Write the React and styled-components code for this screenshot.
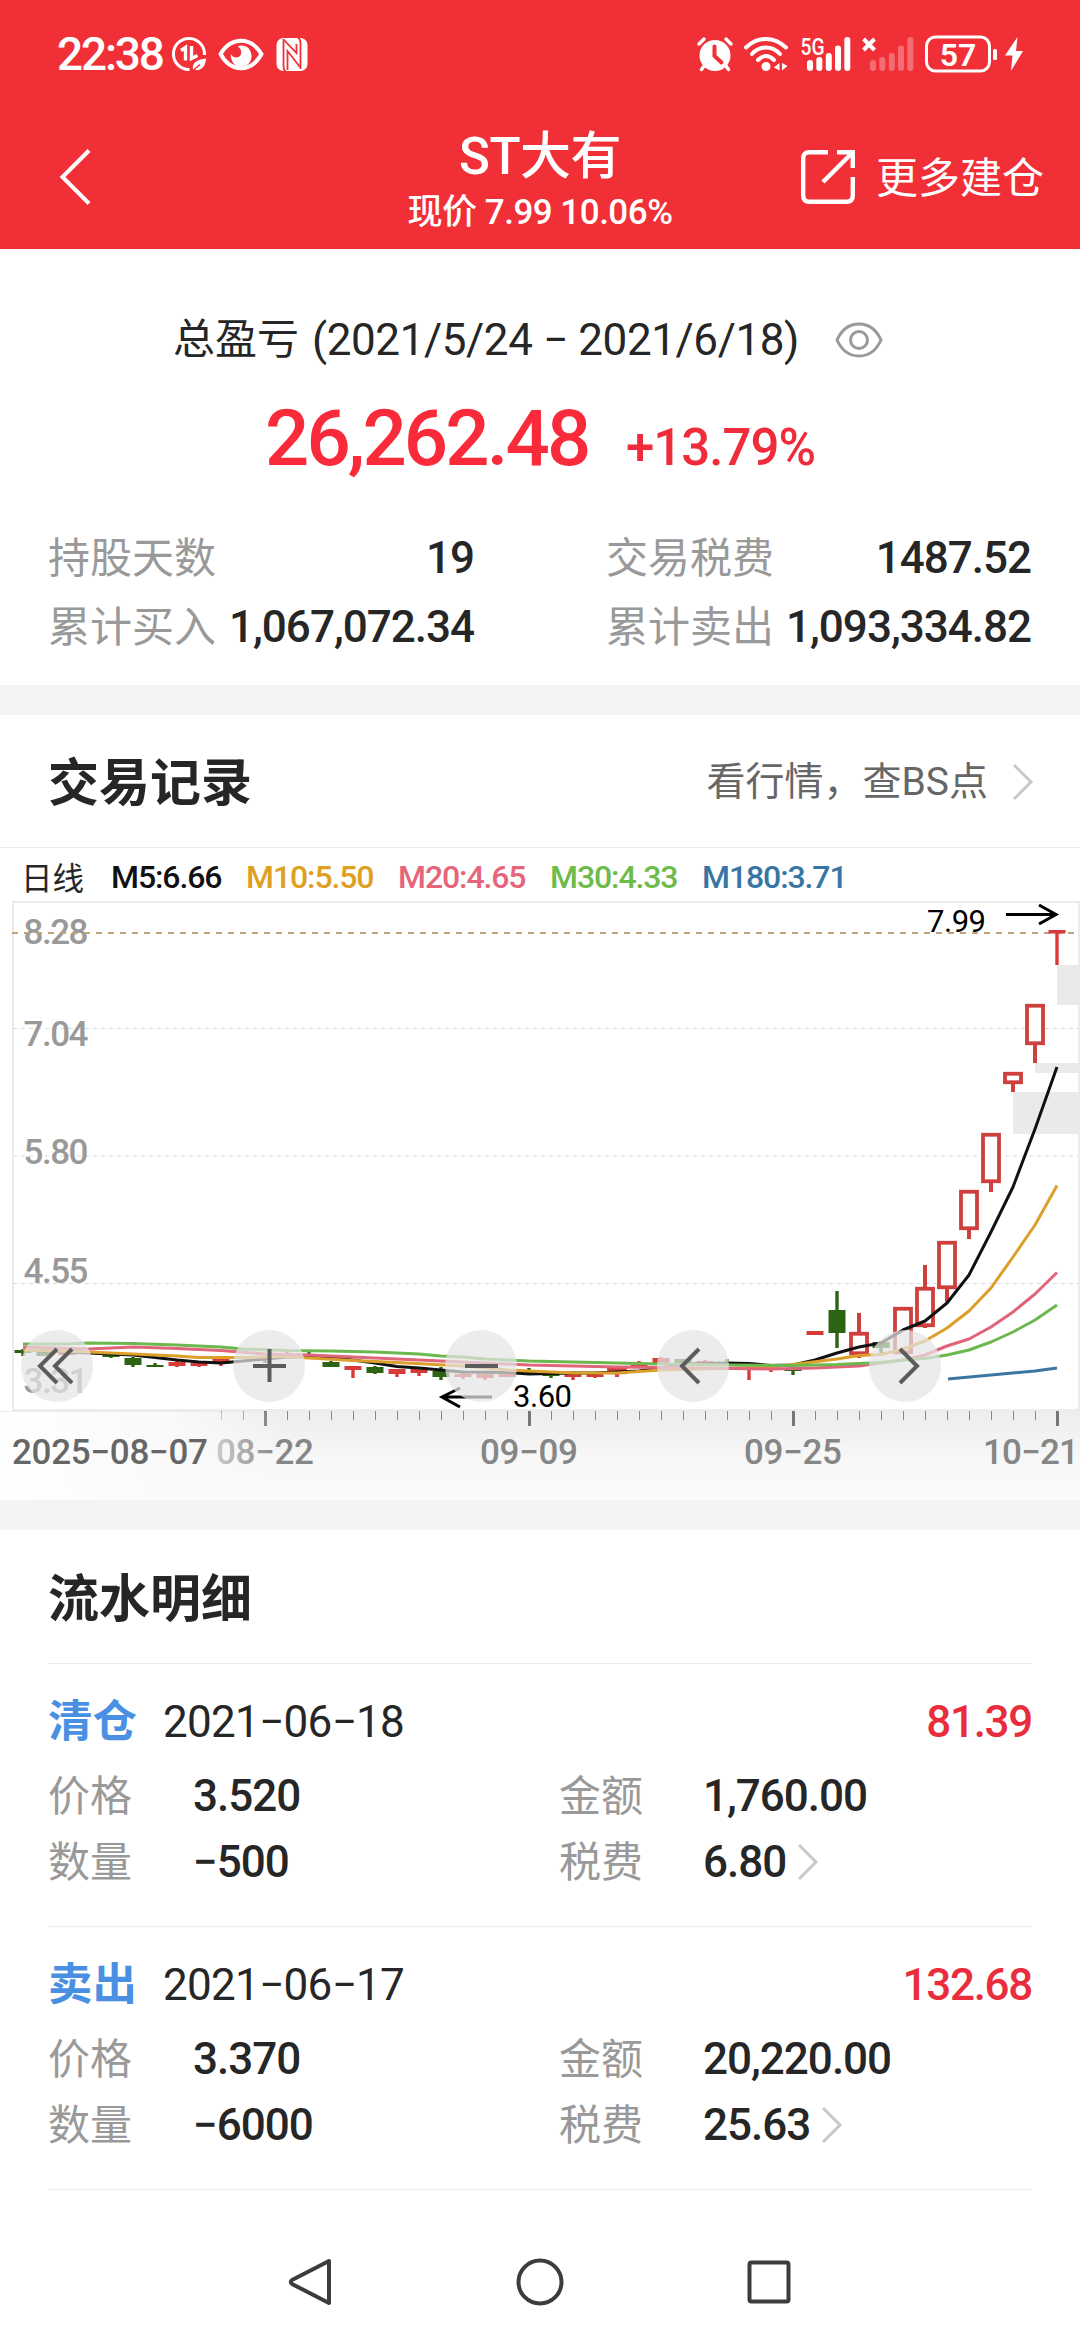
import React from 'react';
import styled, { createGlobalStyle } from 'styled-components';

const GlobalStyle = createGlobalStyle`
  * {
    box-sizing: border-box;
  }
  body {
    margin: 0;
    background: #fff;
    font-family: Roboto, 'Noto Sans CJK SC', sans-serif;
    color: #262626;
  }
  svg {
    display: block;
    flex: none;
    overflow: visible;
  }
`;

// Summary data
const stats = [
  { label: '持股天数', value: '19' },
  { label: '交易税费', value: '1487.52' },
  { label: '累计买入', value: '1,067,072.34' },
  { label: '累计卖出', value: '1,093,334.82' },
];

const averages = [
  { text: 'M5:6.66', color: '#111', width: 135 },
  { text: 'M10:5.50', color: '#dfa021', width: 152 },
  { text: 'M20:4.65', color: '#e5657a', width: 152 },
  { text: 'M30:4.33', color: '#6dbb49', width: 152 },
  { text: 'M180:3.71', color: '#3775a5', width: 160 },
];

const records = [
  { type: '清仓', date: '2021−06−18', profit: '81.39', price: '3.520', amount: '1,760.00', count: '−500', tax: '6.80' },
  { type: '卖出', date: '2021−06−17', profit: '132.68', price: '3.370', amount: '20,220.00', count: '−6000', tax: '25.63' },
];

// x, wick top, body top, body bottom, wick bottom, kind (g = fall, r = rise, h = hollow rise)
const candles = [
  [23, 1349, 1350, 1353, 1356, 'g'],
  [45, 1352, 1352, 1356, 1356, 'g'],
  [67, 1352, 1352, 1355, 1355, 'r'],
  [111, 1355, 1355, 1357, 1358, 'g'],
  [133, 1357, 1358, 1365, 1367, 'g'],
  [155, 1363, 1365, 1367, 1367, 'g'],
  [177, 1361, 1362, 1366, 1367, 'r'],
  [199, 1363, 1363, 1366, 1367, 'r'],
  [221, 1359, 1359, 1364, 1366, 'r'],
  [265, 1357, 1357, 1359, 1363, 'g'],
  [287, 1352, 1354, 1356, 1356, 'r'],
  [309, 1352, 1354, 1356, 1356, 'g'],
  [331, 1361, 1362, 1367, 1367, 'g'],
  [353, 1366, 1366, 1370, 1378, 'r'],
  [375, 1366, 1367, 1373, 1374, 'g'],
  [397, 1369, 1369, 1374, 1377, 'r'],
  [419, 1368, 1369, 1373, 1376, 'r'],
  [441, 1367, 1371, 1377, 1380, 'g'],
  [463, 1373, 1374, 1377, 1379, 'r'],
  [485, 1374, 1374, 1378, 1380, 'r'],
  [507, 1374, 1374, 1377, 1377, 'r'],
  [529, 1368, 1371, 1373, 1374, 'g'],
  [551, 1373, 1374, 1376, 1378, 'g'],
  [573, 1374, 1374, 1377, 1380, 'r'],
  [595, 1374, 1374, 1377, 1378, 'r'],
  [617, 1368, 1368, 1374, 1377, 'h'],
  [639, 1361, 1365, 1367, 1367, 'r'],
  [661, 1357, 1358, 1363, 1363, 'r'],
  [683, 1359, 1359, 1363, 1363, 'g'],
  [705, 1360, 1361, 1364, 1364, 'r'],
  [727, 1359, 1363, 1365, 1366, 'g'],
  [749, 1367, 1367, 1370, 1380, 'r'],
  [771, 1367, 1368, 1370, 1372, 'r'],
  [793, 1367, 1369, 1371, 1375, 'g'],
  [815, 1331, 1331, 1335, 1335, 'r'],
  [837, 1291, 1310, 1333, 1348, 'g'],
  [859, 1313, 1332, 1355, 1358, 'h'],
  [881, 1341, 1342, 1348, 1353, 'g'],
  [903, 1307, 1307, 1354, 1354, 'h'],
  [925, 1265, 1287, 1327, 1328, 'h'],
  [947, 1241, 1241, 1289, 1302, 'h'],
  [969, 1190, 1190, 1230, 1239, 'h'],
  [991, 1133, 1133, 1183, 1192, 'h'],
  [1013, 1072, 1072, 1084, 1092, 'h'],
  [1035, 1004, 1004, 1045, 1063, 'h'],
  [1057, 930, 930, 933.5, 965, 'r'],
];

const lines = [
  {
    color: '#111',
    points: '23,1350 67,1352 111,1354 133,1355 155,1357.5 177,1360 199,1362 221,1363 243,1361 287,1357 309,1357 331,1358 353,1360 375,1363 397,1366.5 419,1368 463,1372 507,1372.5 529,1374 573,1373 595,1373 617,1372 639,1371 661,1368 683,1364 727,1363 749,1363.5 771,1365.5 793,1365 815,1360 837,1353 859,1347 881,1343 903,1330 925,1321 947,1303 969,1275 991,1232 1013,1187 1035,1129 1057,1067',
  },
  {
    color: '#dc9f2a',
    points: '23,1350 89,1352 133,1354 177,1356 199,1357.5 243,1357.5 287,1356.5 309,1358 353,1360.5 397,1362.5 463,1366 507,1370 551,1372 573,1373 617,1373 661,1370 705,1369 771,1367 793,1364.5 837,1359 859,1355.5 881,1354.5 903,1349 925,1341 947,1328 969,1311 991,1288 1013,1257 1035,1225 1057,1185.5',
  },
  {
    color: '#e0647a',
    points: '23,1347 89,1349 133,1347 177,1348.5 221,1350.5 265,1354 309,1355 353,1357 397,1359 441,1361 529,1365 573,1366 617,1367 705,1368 771,1369 815,1368 859,1366 903,1360 925,1355 947,1346 969,1339 991,1327 1013,1312 1035,1294 1057,1272.5',
  },
  {
    color: '#6db74f',
    points: '23,1344 67,1344 89,1343 133,1343.5 177,1345 221,1347 243,1349 287,1350.5 331,1351 375,1352 419,1354 441,1356 463,1357 485,1359 529,1361 573,1362 617,1363 661,1364 727,1365 793,1365.5 837,1364.5 881,1362.5 903,1360 925,1358.5 947,1355 969,1350 991,1342 1013,1332 1035,1320 1057,1305',
  },
  { color: '#3b76a3', points: '948,1379 991,1375 1035,1371 1057,1368' },
];

const priceLabels = [
  ['8.28', 944],
  ['7.04', 1046],
  ['5.80', 1164],
  ['4.55', 1283],
  ['3.31', 1393],
];

const buttonIcons = [
  'M36 19 L19 36 L36 53 M51 19 L34 36 L51 53',
  'M20 36 H53 M36.5 19 V52',
  'M20 36 H53',
  'M42 19 L25 36 L42 53',
  'M31 19 L48 36 L31 53',
];

const signalBars = [
  [0, 23],
  [9.3, 20],
  [18.8, 16],
  [28, 8.5],
  [37.3, 0],
];

const Signal = ({ faded, children }) => (
  <svg width="52" height="36" viewBox="0 0 52 36" fill="#fff">
    {children}
    {signalBars.map(([x, y]) => (
      <rect key={x} x={x + 8} y={y + 1} width="6" height={34 - y} rx="3" opacity={faded ? 0.3 : 1} />
    ))}
  </svg>
);

const Chevron = ({ color }) => (
  <svg width="22" height="38" viewBox="0 0 22 38" fill="none" stroke={color} strokeWidth="3">
    <path d="M2 2 L19 19 L2 36" />
  </svg>
);

const Candle = ({ data }) => {
  const [x, high, top, bottom, low, kind] = data;
  const color = kind === 'g' ? '#2c6413' : kind === 'r' ? '#d83a39' : '#cf3f3e';
  return (
    <g>
      {kind === 'h' ? (
        <>
          <path d={`M${x} ${high} V${top} M${x} ${bottom} V${low}`} stroke={color} strokeWidth="4" />
          <rect x={x - 8} y={top + 1.75} width="16" height={bottom - top - 3.5} fill="#fff" stroke={color} strokeWidth="3.8" />
        </>
      ) : (
        <>
          <path d={`M${x} ${high} V${low}`} stroke={color} strokeWidth="3.4" />
          <rect x={x - 8.5} y={top} width="17" height={bottom - top} fill={color} />
        </>
      )}
    </g>
  );
};

const KLineChart = () => (
  <svg width="1080" height="600" viewBox="0 900 1080 600">
    <defs>
      <linearGradient id="axisBg" x1="0" y1="0" x2="0" y2="1">
        <stop offset="0" stopColor="#ededed" />
        <stop offset="0.5" stopColor="#f7f7f7" />
        <stop offset="1" stopColor="#fbfbfb" />
      </linearGradient>
      <linearGradient id="axisFade" x1="0" y1="0" x2="1" y2="0">
        <stop offset="0" stopColor="#fff" />
        <stop offset="0.65" stopColor="#fafafa" stopOpacity="0.9" />
        <stop offset="1" stopColor="#fafafa" stopOpacity="0" />
      </linearGradient>
    </defs>
    <rect x="0" y="1411" width="1080" height="89" fill="url(#axisBg)" />
    <path d="M13 1410 V902 H1079 V1410 Z" fill="#fff" stroke="#ececec" strokeWidth="2" />
    <path d="M13 1028.5 H1079 M13 1283.5 H1079" stroke="#d9d9d9" strokeWidth="1" strokeDasharray="4 4" />
    <path d="M13 1156 H1079" stroke="#ededed" strokeWidth="2" strokeDasharray="4 4" />
    {priceLabels.map(([text, y]) => (
      <text key={text} x="23.5" y={y} fontSize="35" fontWeight="500" fill="#999" textLength="65">{text}</text>
    ))}
    <path d="M12 933 H1075" stroke="#c0a57c" strokeWidth="2" strokeDasharray="6 6" />
    <path d="M1057 965 h23 v40 h-23 Z M1035 1063 h45 v10 h-45 Z M1013 1092 h67 v42 h-67 Z" fill="#eaeaea" />
    {candles.map((c) => (
      <Candle key={c[0]} data={c} />
    ))}
    {lines.map((l) => (
      <polyline key={l.color} points={l.points} fill="none" stroke={l.color} strokeWidth="3" strokeLinejoin="round" />
    ))}
    <g fill="none" stroke="#000" strokeWidth="3">
      <path d="M1006 914.5 H1056 M1039 905 L1056 914.5 L1039 924" />
      <path d="M492 1397 H442 M460 1388 L442 1397 L460 1407" />
    </g>
    <text x="927" y="932" fontSize="31" fill="#000" textLength="59">7.99</text>
    <text x="513" y="1407" fontSize="31" fill="#000" textLength="59">3.60</text>
    {Array.from({ length: 39 }, (_, i) => {
      const x = 221.5 + i * 22;
      const major = (i - 2) % 12 === 0;
      return (
        <rect
          key={i}
          x={major ? x - 1.5 : x - 0.5}
          y="1411"
          width={major ? 3 : 1}
          height={major ? 15 : 9}
          fill={major ? '#777' : '#888'}
        />
      );
    })}
    <g fontSize="35" fontWeight="500" fill="#868686">
      <text x="216" y="1464" textLength="98">08−22</text>
      <text x="480" y="1464" textLength="98">09−09</text>
      <text x="744" y="1464" textLength="98">09−25</text>
      <text x="983" y="1464" textLength="96">10−21</text>
    </g>
    <rect x="0" y="1412" width="280" height="88" fill="url(#axisFade)" />
    <text x="12" y="1464" fontSize="35" fontWeight="500" fill="#666" textLength="196">2025−08−07</text>
  </svg>
);

const App = () => {
  return (
    <Page>
      <GlobalStyle />
      <Header>
        <StatusBar>
          <Clock>22:38</Clock>
          <StatusGroup gap={12}>
            <svg width="34" height="36" viewBox="0 0 34 36" fill="none" stroke="#fff" strokeWidth="3">
              <path d="M17.5 33.4 A15.5 15.5 0 1 1 32.4 19" />
              <path d="M9 14.5 L13.5 11.5 V24.5" strokeWidth="3.4" />
              <path d="M19.5 10 V22.5 L25.5 19.5" strokeWidth="3.4" />
              <path d="M21 34 C19.5 26 26 23.5 34 22.5 C33.5 30 30 35 22.5 34 Z" fill="#fff" stroke="none" />
              <path d="M20.5 35 L28 28.5" stroke="#f12f37" strokeWidth="1.4" />
            </svg>
            <svg width="46" height="36" viewBox="0 0 46 36">
              <path d="M2.5 18 C8 9 15 4.8 23 4.8 S38 9 43.5 18 C38 28 31 32.2 23 32.2 S8 28 2.5 18 Z" fill="none" stroke="#fff" strokeWidth="4" strokeLinejoin="round" />
              <path d="M23 9.5 C29 9 33.5 14 33.5 20 C33.5 26.5 29 30.5 23 30.5 C17 30.5 12.5 26 12.8 18 C15 22.5 21.5 23 23 18 C24 14.5 22 12 19.5 10.6 C20.5 10 21.5 9.6 23 9.5 Z" fill="#fff" />
            </svg>
            <svg width="32" height="36" viewBox="0 0 32 36" fill="none" stroke="#f12f37" strokeWidth="1.8">
              <rect x="0.5" y="2" width="31" height="33" rx="7" fill="#fff" stroke="none" />
              <path d="M7.5 3 V30 Q7.5 34 9.5 35.5" />
              <path d="M22 1.5 Q24.5 3 24.5 7 V33" />
              <path d="M8 4 L20.5 17 V8" />
              <path d="M11.5 34 V15 L24 31" />
            </svg>
          </StatusGroup>
          <Spacer />
          <StatusGroup gap={11}>
            <svg width="36" height="36" viewBox="0 0 36 36" fill="none" stroke="#fff" strokeLinecap="round">
              <circle cx="18" cy="19.5" r="15.5" fill="#fff" stroke="none" />
              <path d="M2 8 L7 3 M34 8 L29 3 M7 30 L4.5 33.5 M29 30 L31.5 33.5" strokeWidth="3.4" />
              <path d="M17.5 10.5 V20 L24.5 26.5" stroke="#f12f37" strokeWidth="4" />
            </svg>
            <svg width="44" height="36" viewBox="0 0 44 36" fill="none" stroke="#fff" strokeWidth="4" strokeLinecap="round">
              <path d="M2 11.5 Q11 3 22 3 T42 11.5" />
              <path d="M8 18 Q14 11.5 22 11.5 T36 18" />
              <path d="M14 24 Q18 20 22 20 T30 24" />
              <circle cx="22" cy="30.5" r="4.5" fill="#fff" stroke="none" />
              <path d="M35.5 27 V34.5 L30 31.5 Z M38 27 V34.5 L43.5 30 Z" fill="#fff" stroke="none" />
            </svg>
            <Signal>
              <text x="1.5" y="18.5" fontSize="23.5" fontWeight="500" textLength="24" lengthAdjust="spacingAndGlyphs">5G</text>
            </Signal>
            <Signal faded>
              <path d="M1.5 3 L12.5 14 M12.5 3 L1.5 14" stroke="#fff" strokeWidth="4" />
            </Signal>
            <svg width="73" height="38" viewBox="0 0 73 38" fill="#fff">
              <rect x="1.5" y="2" width="63" height="34" rx="9" fill="none" stroke="#fff" strokeWidth="3" />
              <rect x="68" y="14" width="4" height="11" rx="1.5" />
              <text x="33" y="30.5" fontSize="32" fontWeight="600" textAnchor="middle">57</text>
            </svg>
            <Bolt width="18" height="36" viewBox="0 0 18 36" fill="#fff">
              <path d="M12.5 1 L0 19.5 H7.5 L6 35 L18 15 H11 Z" />
            </Bolt>
          </StatusGroup>
        </StatusBar>
        <NavBar>
          <svg width="34" height="58" viewBox="0 0 34 58" fill="none" stroke="#fff" strokeWidth="4">
            <path d="M31 2.5 L4.5 29 L31 55.5" />
          </svg>
          <NavTitle>
            <StockName>ST大有</StockName>
            <StockPrice>现价 7.99 10.06%</StockPrice>
          </NavTitle>
          <MoreLink>
            <svg width="54" height="54" viewBox="0 0 54 54" fill="none" stroke="#fff" strokeWidth="4.4">
              <path d="M27 2.2 H8.5 Q2.2 2.2 2.2 8.5 V45.5 Q2.2 51.8 8.5 51.8 H45.5 Q51.8 51.8 51.8 45.5 V27" />
              <path d="M36 2.2 H51.8 V18 M51 3 L22 32" />
            </svg>
            <MoreText>更多建仓</MoreText>
          </MoreLink>
        </NavBar>
      </Header>

      <Summary>
        <Period>
          <span>总盈亏</span>
          <PeriodDates>(2021/5/24 − 2021/6/18)</PeriodDates>
          <svg width="48" height="36" viewBox="0 0 48 36" fill="none" stroke="#999" strokeWidth="3">
            <path d="M2 18 C7 7 14.5 2 24 2 S41 7 46 18 C41 29 33.5 34 24 34 S7 29 2 18 Z" />
            <circle cx="24" cy="18" r="8.5" />
          </svg>
        </Period>
        <Profit>
          <ProfitValue>26,262.48</ProfitValue>
          <ProfitRate>+13.79%</ProfitRate>
        </Profit>
        <StatGrid>
          {stats.map((s) => (
            <Stat key={s.label}>
              <Label>{s.label}</Label>
              <Value>{s.value}</Value>
            </Stat>
          ))}
        </StatGrid>
      </Summary>

      <Divider />

      <SectionHeader>
        <SectionTitle>交易记录</SectionTitle>
        <QuoteLink>
          看行情，查BS点
          <Chevron color="#c8c8c8" />
        </QuoteLink>
      </SectionHeader>
      <AverageRow>
        <Cycle>日线</Cycle>
        {averages.map((a) => (
          <Average key={a.text} color={a.color} width={a.width}>{a.text}</Average>
        ))}
      </AverageRow>
      <ChartArea>
        <KLineChart />
        <ChartButtons>
          {buttonIcons.map((d) => (
            <ChartButton key={d}>
              <svg width="72" height="72" viewBox="0 0 72 72" fill="none" stroke="#5c5c5c" strokeWidth="4">
                <path d={d} />
              </svg>
            </ChartButton>
          ))}
        </ChartButtons>
      </ChartArea>

      <Divider />

      <Details>
        <DetailsTitle>
          <SectionTitle>流水明细</SectionTitle>
        </DetailsTitle>
        {records.map((r) => (
          <Record key={r.date}>
            <RecordHead>
              <RecordType>{r.type}</RecordType>
              <RecordDate>{r.date}</RecordDate>
              <RecordProfit>{r.profit}</RecordProfit>
            </RecordHead>
            <RecordRow>
              <Label>价格</Label>
              <Value>{r.price}</Value>
              <Label>金额</Label>
              <Value>{r.amount}</Value>
            </RecordRow>
            <RecordRow>
              <Label>数量</Label>
              <Value>{r.count}</Value>
              <Label>税费</Label>
              <TaxValue>
                <Value>{r.tax}</Value>
                <Chevron color="#c8c8c8" />
              </TaxValue>
            </RecordRow>
          </Record>
        ))}
      </Details>

      <SystemNav>
        <svg width="48" height="52" viewBox="0 0 48 52" fill="none" stroke="#3c3c3c" strokeWidth="4" strokeLinejoin="round">
          <path d="M42 5 V47 L5 28 Q2.5 26 5 24 Z" />
        </svg>
        <svg width="48" height="52" viewBox="0 0 48 52" fill="none" stroke="#3c3c3c" strokeWidth="4">
          <circle cx="24" cy="26" r="21.5" />
        </svg>
        <svg width="48" height="52" viewBox="0 0 48 52" fill="none" stroke="#3c3c3c" strokeWidth="4">
          <rect x="4.5" y="6.5" width="39" height="39" rx="2" />
        </svg>
      </SystemNav>
    </Page>
  );
};

export default App;

// Styled Components
const Page = styled.div`
  width: 1080px;
  height: 2340px;
  overflow: hidden;
  display: flex;
  flex-direction: column;
  background: #fff;
`;

const Header = styled.div`
  height: 249px;
  background: #f12f37;
  color: #fff;
`;

const StatusBar = styled.div`
  height: 108px;
  display: flex;
  align-items: center;
  padding: 0 57px 0 57px;
`;

const Clock = styled.div`
  width: 115px;
  font-size: 46px;
  line-height: 54px;
  letter-spacing: -2.2px;
  font-weight: 500;
  white-space: nowrap;
`;

const StatusGroup = styled.div.withConfig({ shouldForwardProp: (p) => p !== 'gap' })`
  display: flex;
  align-items: center;
  gap: ${(props) => props.gap}px;
`;

const Bolt = styled.svg`
  margin-left: -4px;
`;

const Spacer = styled.div`
  flex: 1;
`;

const NavBar = styled.div`
  height: 141px;
  display: grid;
  grid-template-columns: 1fr 300px 1fr;
  align-items: center;
  padding: 0 36px 3px 58px;
`;

const NavTitle = styled.div`
  display: flex;
  flex-direction: column;
  align-items: center;
  padding-top: 9px;
  margin: 0 11px 0 -11px;
`;

const StockName = styled.div`
  font-size: 51px;
  line-height: 60px;
  font-weight: 500;
  letter-spacing: -0.5px;
`;

const StockPrice = styled.div`
  margin-top: 3px;
  font-size: 35px;
  line-height: 46px;
  font-weight: 500;
  letter-spacing: -0.5px;
  white-space: nowrap;
`;

const MoreLink = styled.div`
  display: flex;
  align-items: center;
  justify-content: flex-end;
  gap: 21px;
`;

const MoreText = styled.span`
  padding-top: 4px;
  font-size: 42px;
  line-height: 60px;
  white-space: nowrap;
`;

const Summary = styled.div`
  height: 436px;
  padding: 61px 48px 0;
`;

const Period = styled.div`
  display: flex;
  align-items: center;
  height: 60px;
  padding-left: 125px;
  font-size: 42px;
  line-height: 60px;
  white-space: nowrap;
`;

const PeriodDates = styled.span`
  width: 523px;
  margin-left: 13px;
  font-size: 44px;
  letter-spacing: -0.4px;
`;

const Profit = styled.div`
  display: flex;
  align-items: baseline;
  margin-top: 22px;
  padding-left: 217px;
  line-height: 94px;
  font-weight: 500;
  color: #f92a39;
`;

const ProfitValue = styled.div`
  width: 361px;
  font-size: 78px;
  letter-spacing: -2.9px;
`;

const ProfitRate = styled.div`
  font-size: 51px;
  letter-spacing: -1px;
  color: #ef2c3b;
`;

const StatGrid = styled.div`
  display: grid;
  grid-template-columns: 426px 425px;
  column-gap: 132px;
  row-gap: 9px;
  margin-top: 33px;
`;

const Stat = styled.div`
  display: flex;
  align-items: baseline;
  justify-content: space-between;
  height: 60px;
`;

const Label = styled.span`
  font-size: 42px;
  line-height: 60px;
  font-weight: 400;
  color: #999;
  white-space: nowrap;
`;

const Value = styled.span`
  font-size: 44px;
  line-height: 60px;
  font-weight: 500;
  letter-spacing: -1px;
`;

const Divider = styled.div`
  height: 30px;
  flex: none;
  background: #f4f4f4;
`;

const SectionHeader = styled.div`
  height: 133px;
  display: flex;
  align-items: center;
  justify-content: space-between;
  padding: 2px 46px 0 48px;
  border-bottom: 1px solid #ececec;
`;

const SectionTitle = styled.h2`
  margin: 0;
  padding-top: 4px;
  font-size: 51px;
  line-height: 60px;
  font-weight: 700;
`;

const QuoteLink = styled.div`
  display: flex;
  align-items: center;
  gap: 24px;
  font-size: 39px;
  line-height: 60px;
  color: #666;
`;

const AverageRow = styled.div`
  height: 52px;
  display: flex;
  align-items: center;
  padding: 6px 0 0 21px;
  font-size: 32px;
  font-weight: 500;
  white-space: nowrap;
`;

const Cycle = styled.span`
  width: 90px;
  padding-bottom: 2px;
  font-size: 31.5px;
  font-weight: 400;
`;

const Average = styled.span.withConfig({ shouldForwardProp: (p) => p !== 'width' && p !== 'color' })`
  width: ${(props) => props.width}px;
  color: ${(props) => props.color};
  letter-spacing: -1.1px;
`;

const ChartArea = styled.div`
  position: relative;
  height: 600px;
`;

const ChartButtons = styled.div`
  position: absolute;
  left: 21px;
  top: 430px;
  display: flex;
  gap: 140px;
`;

const ChartButton = styled.button`
  width: 72px;
  height: 72px;
  padding: 0;
  border: none;
  border-radius: 50%;
  background: rgba(229, 229, 229, 0.72);
`;

const Details = styled.div`
  padding: 0 48px;
`;

const DetailsTitle = styled.div`
  height: 134px;
  display: flex;
  align-items: center;
  padding-top: 2px;
  border-bottom: 1px solid #ececec;
`;

const Record = styled.div`
  height: 263px;
  padding-top: 28px;
  border-bottom: 1px solid #ececec;
`;

const RecordHead = styled.div`
  display: flex;
  align-items: baseline;
  height: 74px;
  line-height: 60px;
`;

const RecordType = styled.span`
  width: 115px;
  font-size: 44.5px;
  font-weight: 700;
  color: #4a90e2;
`;

const RecordDate = styled.span`
  flex: 1;
  font-size: 44px;
  letter-spacing: -0.7px;
`;

const RecordProfit = styled.span`
  font-size: 44px;
  font-weight: 500;
  letter-spacing: -1.3px;
  color: #ea2d3c;
`;

const RecordRow = styled.div`
  display: grid;
  grid-template-columns: 145px 366px 144px 1fr;
  align-items: baseline;
  height: 66px;
`;

const TaxValue = styled.div`
  display: flex;
  align-items: center;
  gap: 11px;
`;

const SystemNav = styled.div`
  flex: 1;
  display: flex;
  justify-content: center;
  align-items: center;
  gap: 181px;
  padding-top: 34px;
`;
